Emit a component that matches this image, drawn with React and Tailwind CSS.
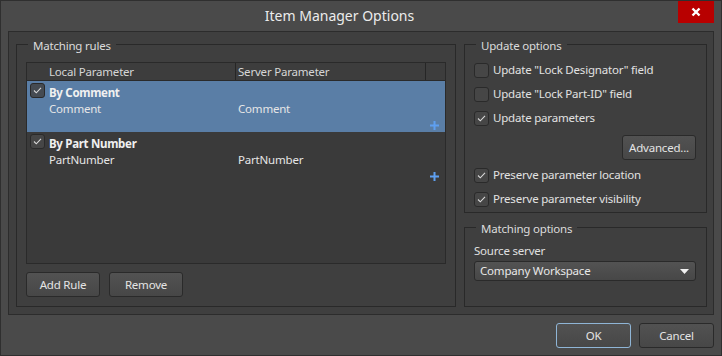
import React from "react";

const FONT = { fontFamily: '"Noto Sans", "Open Sans", Arial, sans-serif' };

function Check({ checked, dark }) {
  return (
    <div
      className={`w-[15px] h-[15px] rounded-[3px] border border-[#2a2a2a] flex items-center justify-center shrink-0 ${
        dark ? "bg-[#454b52]" : "bg-[#464646]"
      }`}
    >
      {checked && (
        <svg width="13" height="13" viewBox="0 0 13 13">
          <path d="M3 6.5 L5.3 8.8 L10 3.8" fill="none" stroke="#d8d8d8" strokeWidth="1.1" />
        </svg>
      )}
    </div>
  );
}

function Plus() {
  return (
    <svg width="9" height="9" viewBox="0 0 9 9">
      <rect x="3.5" y="0" width="2" height="9" fill="#5e9ff0" />
      <rect x="0" y="3.5" width="9" height="2" fill="#5e9ff0" />
    </svg>
  );
}

function Btn({ children, w, focus }) {
  return (
    <div
      className={`${w} h-[25px] rounded-[3px] border flex items-center justify-center text-[11.5px] tracking-[-0.2px] text-[#e4e4e4] bg-gradient-to-b from-[#525252] to-[#474747] ${
        focus ? "border-[#8fb5d6]" : "border-[#2a2a2a]"
      }`}
    >
      {children}
    </div>
  );
}

function Group({ label, className, children }) {
  return (
    <div className={`border border-[#292929] ${className}`}>
      <div className="-mt-[7px] ml-[2px] px-[5px] w-fit bg-[#3f3f3f] text-[11.5px] tracking-[-0.2px] leading-[16px] text-[#dcdcdc]">
        {label}
      </div>
      {children}
    </div>
  );
}

function Row({ title, local, server, selected }) {
  return (
    <div className={`h-[51px] flex flex-col ${selected ? "bg-[#5a7ea6]" : ""}`}>
      <div className="flex items-start">
        <div className="ml-[3px] mt-[2px]">
          <Check checked dark={selected} />
        </div>
        <div className="ml-[4px] mt-[4px] text-[11.5px] tracking-[-0.3px] leading-[16px] font-bold text-[#f0f0f0]">{title}</div>
      </div>
      <div className="flex text-[11.5px] tracking-[-0.2px] leading-[16px] text-[#e6e6e6]">
        <div className="w-[209px] pl-[22px]">{local}</div>
        <div className="pl-[2px]">{server}</div>
      </div>
      <div className="mt-[4px] h-[9px] flex justify-end pr-[6px]">
        <Plus />
      </div>
    </div>
  );
}

function Opt({ checked, children }) {
  return (
    <div className="h-[24px] flex items-center gap-[4px] text-[11.5px] tracking-[-0.2px] text-[#e2e2e2]">
      <Check checked={checked} />
      <span>{children}</span>
    </div>
  );
}

export default function App() {
  return (
    <div
      style={FONT}
      className="w-[722px] h-[356px] bg-[#4a4a4a] border border-[#2f2f2f] flex flex-col"
    >
      <div className="h-[30px] flex shrink-0">
        <div className="flex-1 flex items-center justify-center text-[14px] text-[#ececec] pb-[1px]">
          Item Manager Options
        </div>
        <div className="w-[36px] h-[22px] mr-[7px] bg-[#b80000] flex items-center justify-center">
          <svg width="10" height="10" viewBox="0 0 10 10">
            <path d="M1.5 1.5 L8.5 8.5 M8.5 1.5 L1.5 8.5" stroke="#ffffff" strokeWidth="2.4" />
          </svg>
        </div>
      </div>

      <div className="ml-[7px] w-[706px] h-[284px] border border-[#2c2c2c] bg-[#3f3f3f] pt-[12px] pl-[7px] pr-[6px] pb-[7px] flex gap-[8px]">
        <Group label="Matching rules" className="w-[440px] flex flex-col px-[9px] pb-[9px]">
          <div className="mt-[8px] flex-1 border border-[#2a2a2a] bg-[#3a3a3a] flex flex-col">
            <div className="h-[18px] flex border-b border-[#2a2a2a] bg-[#3d3d3d] text-[11.5px] tracking-[-0.2px] leading-[17px] text-[#d6d6d6]">
              <div className="w-[209px] border-r border-[#262626] pl-[22px]">Local Parameter</div>
              <div className="w-[190px] border-r border-[#262626] pl-[2px]">Server Parameter</div>
              <div className="flex-1"></div>
            </div>
            <Row title="By Comment" local="Comment" server="Comment" selected />
            <Row title="By Part Number" local="PartNumber" server="PartNumber" />
          </div>
          <div className="mt-[8px] flex gap-[9px]">
            <Btn w="w-[74px]">Add Rule</Btn>
            <Btn w="w-[74px]">Remove</Btn>
          </div>
        </Group>

        <div className="w-[243px] flex flex-col gap-[14px]">
          <Group label="Update options" className="h-[169px] pl-[9px] pr-[10px]">
            <div className="mt-[4px]">
              <Opt>Update "Lock Designator" field</Opt>
              <Opt>Update "Lock Part-ID" field</Opt>
              <Opt checked>Update parameters</Opt>
              <div className="mt-[5px] flex justify-end">
                <Btn w="w-[74px]">Advanced...</Btn>
              </div>
              <div className="mt-[3px]">
                <Opt checked>Preserve parameter location</Opt>
                <Opt checked>Preserve parameter visibility</Opt>
              </div>
            </div>
          </Group>
          <Group label="Matching options" className="flex-1 pl-[9px] pr-[10px]">
            <div className="mt-[6px] text-[11.5px] tracking-[-0.2px] leading-[16px] text-[#e0e0e0]">Source server</div>
            <div className="mt-[2px] h-[20px] rounded-[3px] border border-[#2a2a2a] bg-gradient-to-b from-[#535353] to-[#474747] flex items-center justify-between pl-[5px] pr-[6px] text-[11.5px] tracking-[-0.2px] text-[#e8e8e8]">
              <span>Company Workspace</span>
              <svg width="9" height="5" viewBox="0 0 9 5">
                <path d="M0 0 L9 0 L4.5 5 Z" fill="#f2f2f2" />
              </svg>
            </div>
          </Group>
        </div>
      </div>

      <div className="flex-1 flex justify-end items-start pt-[8px] pr-[7px] gap-[8px]">
        <Btn w="w-[75px]" focus>OK</Btn>
        <Btn w="w-[75px]">Cancel</Btn>
      </div>
    </div>
  );
}
